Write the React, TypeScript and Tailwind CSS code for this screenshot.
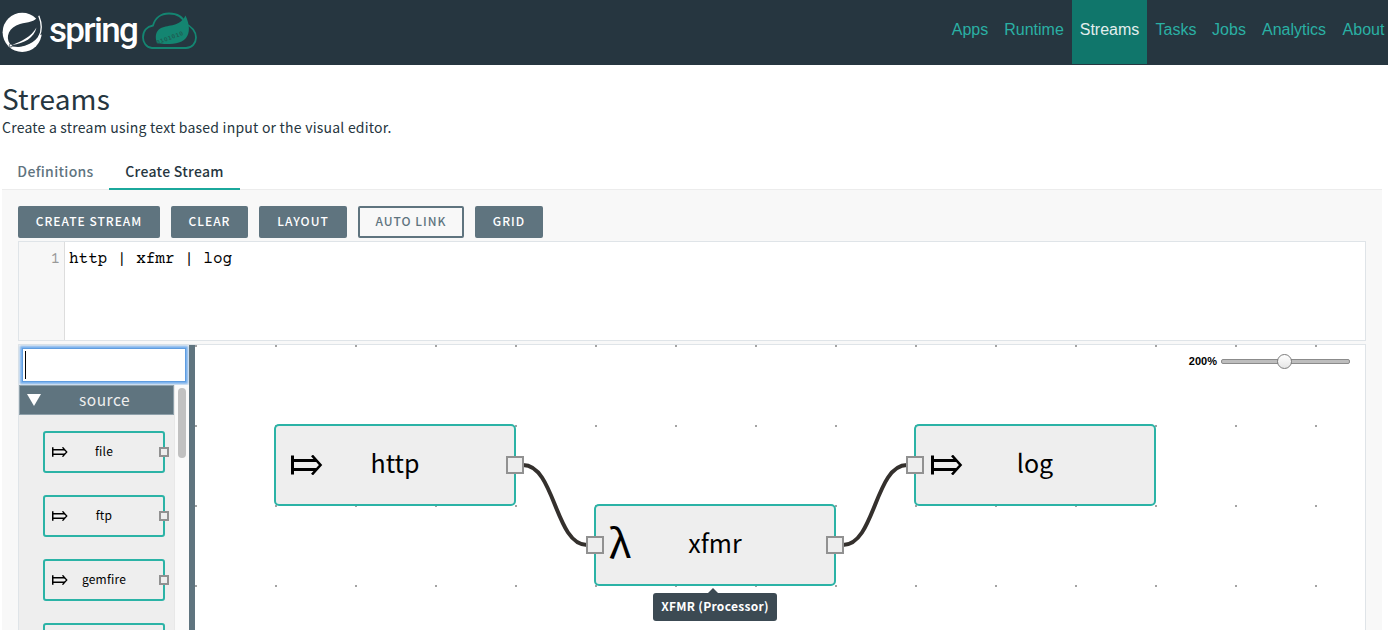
const F = "font-['Noto_Sans_CJK_SC',sans-serif]";

const navItems = [
  { label: "Apps", box: "w-[52px]" },
  { label: "Runtime", box: "w-[76px]" },
  { label: "Streams", box: "w-[75px]", active: true },
  { label: "Tasks", box: "w-[58px]" },
  { label: "Jobs", box: "w-[48px]" },
  { label: "Analytics", box: "w-[82px]" },
  { label: "About", box: "w-[53px] pl-1" },
];

function Header() {
  return (
    <header className="flex h-[65px] shrink-0 justify-between bg-[#263640]">
      <div className="flex items-start">
        <svg className="mt-[10px] ml-[2px] h-11 w-11 shrink-0" viewBox="2 10 44 44">
          <circle cx="22.2" cy="32.3" r="19.6" fill="#fff" />
          <path d="M38.500 15C35 23 28 21.500 20 24C9 27 5 37 10 44L12.500 46.500C24 48.500 35 44 39 35.500L43 34V20Z" fill="#263640" />
          <path d="M38.800 15.800C42 24 42 31 39 36.500" fill="none" stroke="#fff" strokeWidth="1.300" />
          <path d="M40.500 35C36 48 22 55 11.500 47.500C24 48 35 43 39.500 34.500Z" fill="#fff" />
          <path d="M36.500 27.500C34 38 24 43.500 12 45C22 41 31 37 36.500 27.500Z" fill="#fff" />
          <circle cx="10.800" cy="45.500" r="1.500" fill="#fff" stroke="#263640" strokeWidth="0.800" />
        </svg>
        <span className="mt-[9px] ml-[3px] w-[91px] font-['Roboto',sans-serif] text-[35px] leading-[44px] font-medium tracking-[-1.700px] text-white">spring</span>
        <svg className="mt-[10px] h-[42px] w-[58px]" viewBox="140 10 58 42">
          <path d="M154 48H152C146 47.500 143 42 143 37.500C143 31 147 26.500 153 25.500C155 18 161 13.500 169 13.500C177 13.500 183 17 185.500 24C192 26 196 32 196 37.500C196 43 192 48 186 48Z" fill="none" stroke="#148571" strokeWidth="1.800" />
          <path d="M185.500 15.500C190 25 190 33 186 38C181 44 172 44 164 44L157 43C155 38 155 31 161 28C169 24.500 180 27 185.500 15.500Z" fill="#148571" />
          <text x="157" y="44.500" transform="rotate(-20 157 44)" fontSize="6" fontWeight="700" textLength="28" fill="#1f5a50" className="font-['Liberation_Sans',sans-serif]">0101010</text>
        </svg>
      </div>
      <nav className="flex h-16 font-['Liberation_Sans',sans-serif] text-base">
        {navItems.map((n) => (
          <a key={n.label} className={`${n.box} flex h-16 shrink-0 justify-center pt-[18px] leading-6 ${n.active ? "bg-[#10766b] text-[#e3eeee]" : "text-[#2ab0a4]"}`}>{n.label}</a>
        ))}
      </nav>
    </header>
  );
}

function Arrow({ className }: { className: string }) {
  return (
    <svg className={className} viewBox="0 0 32 20" fill="none" stroke="#000">
      <path d="M1.500 0.500V19.500" strokeWidth="3" />
      <path d="M2 5.500H26M2 14.500H26" strokeWidth="2.800" />
      <path d="M21 0.500L29.500 10L21 19.500" strokeWidth="2.600" />
    </svg>
  );
}

const buttons = [
  { label: "CREATE STREAM", box: "w-[142px]" },
  { label: "CLEAR", box: "w-[77px]" },
  { label: "LAYOUT", box: "w-[88px]" },
  { label: "AUTO LINK", box: "w-[106px]", outline: true },
  { label: "GRID", box: "w-[68px]" },
];

function Palette() {
  return (
    <aside className="flex w-[170px] shrink-0 flex-col bg-[#f0f0f0]">
      <div className="mx-[3px] mt-[3px] flex h-[34px] w-[164px] shrink-0 items-center border border-[#5f9de0] bg-white pl-[2px] shadow-[0_0_2px_2px_#77b0ee]">
        <span className="h-[28px] w-px bg-black" />
      </div>
      <div className="mt-[3px] flex min-h-0 flex-1 overflow-hidden">
        <div className="w-[155px] bg-[#eee]">
          <div className="flex h-[30px] w-[155px] items-center border border-[#8ea0aa] bg-[#5f747f]">
            <svg className="ml-[7px] h-3 w-[14px]" viewBox="0 0 14 12"><path d="M0 0H14L7 12Z" fill="#fff" /></svg>
            <span className={`${F} ml-[38px] pb-[2px] text-[15.500px] leading-[26px] tracking-[0.500px] text-[#eee]`}>source</span>
          </div>
          <div className="mt-4 ml-6 flex flex-col gap-[22px]">
            {["file", "ftp", "gemfire", ""].map((name, i) => (
              <div key={i} className="relative flex h-[42px] w-[122px] items-center justify-center rounded-[3px] border-2 border-[#2bb3a6]">
                <Arrow className="absolute top-[14px] left-[7px] h-[10px] w-4" />
                <span className={`${F} pb-[2px] text-[12px] leading-5 tracking-[0.200px] text-black`}>{name}</span>
                <span className="absolute top-[14px] -right-[6px] h-[10px] w-[10px] border-2 border-[#919191] bg-[#eee]" />
              </div>
            ))}
          </div>
        </div>
        <div className="flex w-[15px] justify-center border-l border-[#e8e8e8] bg-[#fafafa] pt-[3px]">
          <div className="h-[70px] w-2 rounded-full bg-[#c1c1c1]" />
        </div>
      </div>
    </aside>
  );
}

const nodes = [
  { name: "http", at: "left-[79px] top-[79px]", input: false, output: true },
  { name: "xfmr", at: "left-[399px] top-[159px]", input: true, output: true },
  { name: "log", at: "left-[719px] top-[79px]", input: true, output: false },
];

function Canvas() {
  return (
    <div className="relative flex-1 overflow-hidden bg-white">
      <svg className="absolute inset-0 h-full w-full">
        <defs>
          <pattern id="dots" width="80" height="80" patternUnits="userSpaceOnUse">
            <rect width="2" height="2" fill="#a3a3a3" />
          </pattern>
        </defs>
        <rect width="100%" height="100%" fill="url(#dots)" />
        <path d="M328 120C360 120 360 200 392 200M648 200C680 200 680 120 712 120" fill="none" stroke="#34302d" strokeWidth="4" />
      </svg>
      {nodes.map((n) => (
        <div key={n.name} className={`${n.at} absolute flex h-[82px] w-[242px] items-center justify-center rounded-[5px] border-2 border-[#2bb3a6] bg-[#eee]`}>
          {n.name === "xfmr" ? (
            <span className={`${F} absolute top-[8px] left-[13px] text-[40px] leading-[54px] text-black`}>λ</span>
          ) : (
            <Arrow className="absolute top-[29px] left-[15px] h-5 w-8" />
          )}
          <span className={`${F} pb-[6px] text-[25px] leading-8 text-black`}>{n.name}</span>
          {n.input && <span className="absolute top-[30px] -left-[10px] h-[18px] w-[18px] border-2 border-[#919191] bg-[#eee]" />}
          {n.output && <span className="absolute top-[30px] -right-[10px] h-[18px] w-[18px] border-2 border-[#919191] bg-[#eee]" />}
        </div>
      ))}
      <div className={`${F} absolute top-[248px] left-[458px] flex h-7 w-[124px] items-center justify-center rounded-[3px] bg-[#3c4a53] pb-[2px] text-[12px] font-bold tracking-[0.300px] text-white`}>
        <svg className="absolute -top-[5px] left-[55px] h-[5px] w-[10px]" viewBox="0 0 10 5"><path d="M0 5L5 0L10 5Z" fill="#3c4a53" /></svg>
        XFMR (Processor)
      </div>
      <div className="absolute top-[8px] right-[15px] flex items-center gap-1">
        <span className="font-['Liberation_Sans',sans-serif] text-[11px] leading-4 font-bold text-black">200%</span>
        <div className="relative h-[5px] w-[129px] rounded-[2px] border border-[#8b8b8b] bg-[#bdbdbd]">
          <span className="absolute -top-[6px] left-[55px] h-[15px] w-[15px] rounded-full border border-[#7d7d7d] bg-linear-to-b from-white to-[#e6e6e6]" />
        </div>
      </div>
    </div>
  );
}

export default function App() {
  return (
    <div className="flex h-[630px] w-[1388px] flex-col overflow-hidden bg-white">
      <Header />
      <main className={`${F} flex min-h-0 flex-1 flex-col pr-[6px] pl-[2px] text-[#263640]`}>
        <h1 className="mt-[13px] text-[28px] leading-10 tracking-[0.150px]">Streams</h1>
        <p className="text-[14px] leading-[18px] tracking-[0.220px]">Create a stream using text based input or the visual editor.</p>
        <div className="mt-[17px] flex h-[37px] shrink-0 border-b border-[#ececec] text-[14px] leading-9 font-medium tracking-[0.300px]">
          <span className="flex w-[107px] justify-center text-[#5f747f]">Definitions</span>
          <span className="flex h-[37px] w-[131px] justify-center border-b-2 border-[#1ba89c]">Create Stream</span>
        </div>
        <section className="flex min-h-0 flex-1 flex-col bg-[#f8f8f8] px-4 pt-4">
          <div className="flex gap-[11px]">
            {buttons.map((b) => (
              <button key={b.label} className={`${b.box} h-8 rounded-[2px] border-2 border-[#5f747f] pb-[2px] text-[12px] leading-[26px] font-medium tracking-[1px] whitespace-nowrap ${b.outline ? "text-[#5f747f]" : "bg-[#5f747f] text-white"}`}>{b.label}</button>
            ))}
          </div>
          <div className="mt-[3px] flex h-[100px] shrink-0 border border-[#dfe4e8] bg-white font-['Courier_Prime','Nimbus_Mono_PS','Liberation_Mono',monospace] text-base leading-6">
            <div className="w-[46px] border-r border-[#ddd] bg-[#f7f7f7] pt-[5px] pr-1 text-right text-[#999]">1</div>
            <pre className="pt-[5px] pl-1 font-['Courier_Prime','Nimbus_Mono_PS','Liberation_Mono',monospace] text-black">http | xfmr | log</pre>
          </div>
          <div className="mt-[3px] flex min-h-0 flex-1 border-x border-t border-[#dfe4e8]">
            <Palette />
            <div className="w-[6px] shrink-0 bg-[#5f747f]" />
            <Canvas />
          </div>
        </section>
      </main>
    </div>
  );
}
